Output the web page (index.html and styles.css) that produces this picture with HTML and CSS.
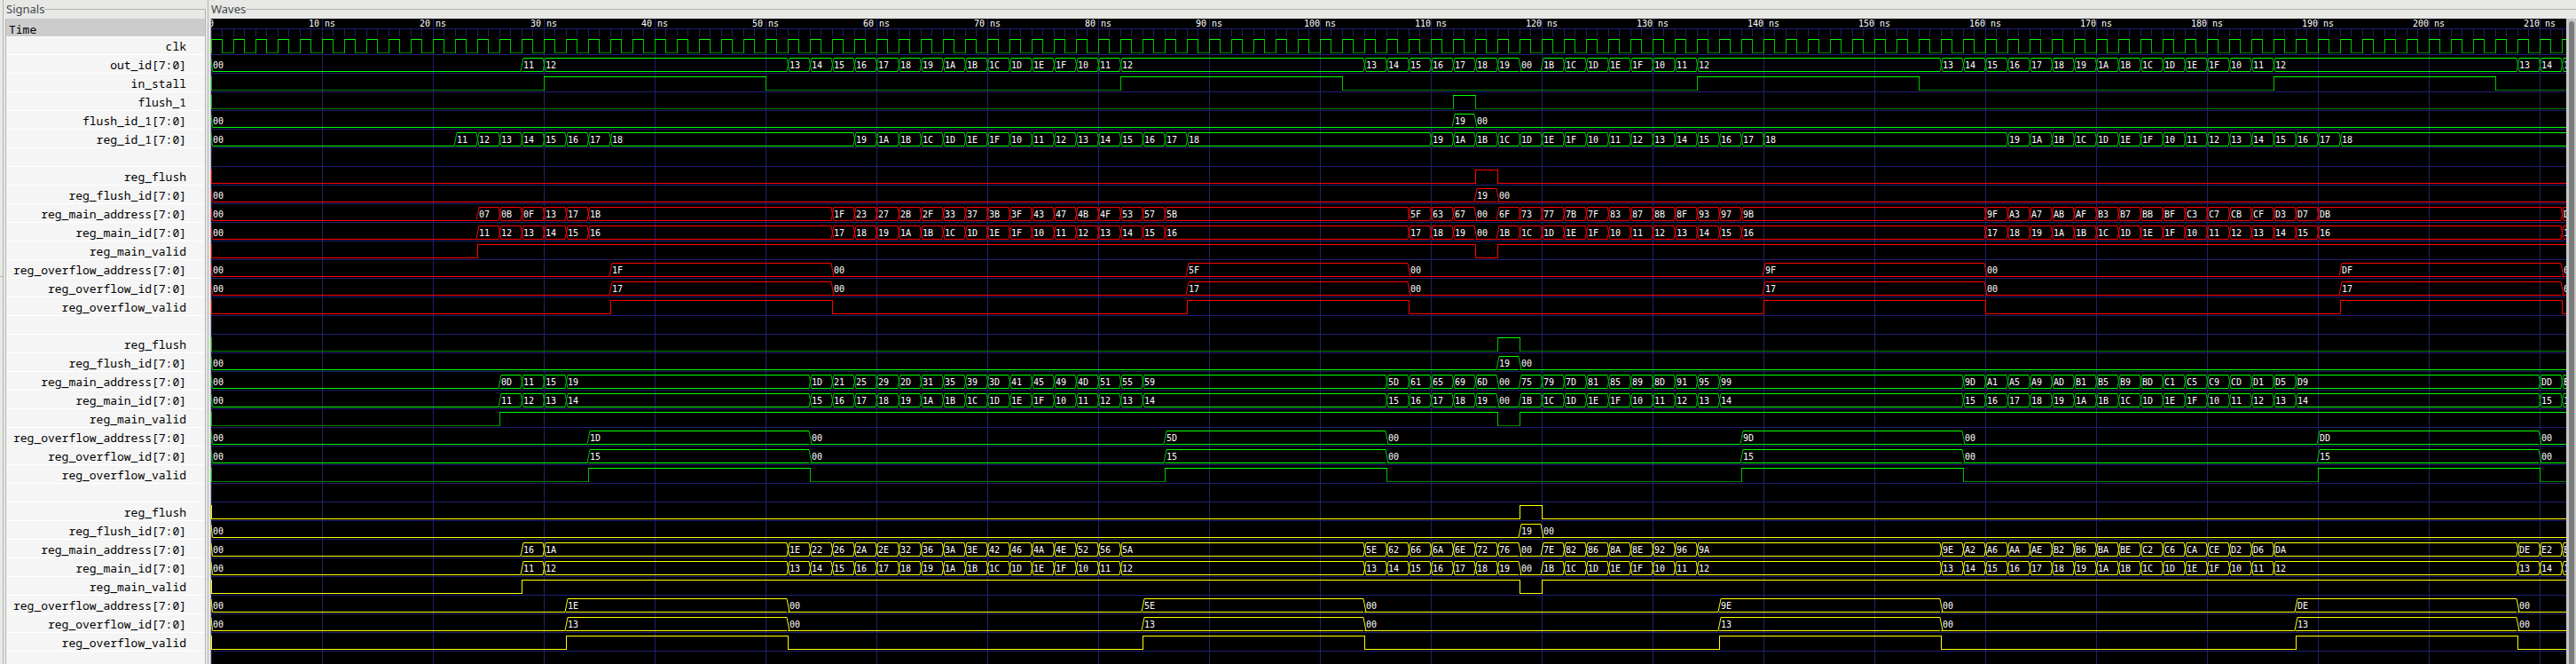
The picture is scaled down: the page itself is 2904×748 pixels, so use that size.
FILE: index.html
```html
<!DOCTYPE html>
<html lang="en">
<head>
<meta charset="utf-8">
<title>Waveform viewer</title>
<link rel="stylesheet" href="styles.css">
</head>
<body>
<main class="viewer">
  <div class="gutter"><div class="gutter-mark"></div></div>
  <div class="divider"></div>
  <fieldset class="panel signals">
    <legend>Signals</legend>
    <div class="signal-list">
      <div class="time-head">Time</div>
      <ul class="names" id="names"></ul>
    </div>
  </fieldset>
  <div class="divider"></div>
  <fieldset class="panel waves">
    <legend>Waves</legend>
    <div class="canvas" id="canvas">
      <svg class="axis" id="axis"></svg>
    </div>
    <div class="scrollbar"><div class="thumb"></div></div>
  </fieldset>
</main>
<script src="waves.js"></script>
</body>
</html>
```
FILE: styles.css
```css
:root {
  --row: 21px;
  --chrome: #e8e8e6;
  --line: #b4b4b0;
  --grid: #202070;
}
* { box-sizing: border-box; }
body {
  margin: 0;
  background: var(--chrome);
  font-family: "Noto Sans", sans-serif;
  font-size: 13px;
}
.viewer { display: flex; min-height: 100vh; }
.gutter { width: 3px; flex: none; }
.gutter-mark { margin-top: 311px; height: 1px; background: var(--line); }
.divider { width: 1px; flex: none; margin-right: 2px; background: var(--line); }
.panel {
  display: flex;
  min-width: 0;
  margin: 0;
  padding: 0;
  border: 1px solid var(--line);
  border-bottom: 0;
}
.panel legend {
  height: 21px;
  margin-left: -1px;
  padding: 0 0 0 1px;
  line-height: 20px;
  color: #43494b;
}
.signals { width: 226px; flex: none; margin-right: 2px; }
.waves { flex: 1; border-right: 0; }
.signal-list {
  flex: 1;
  background: #f5f5f5;
  font-family: "Noto Sans Mono", "DejaVu Sans Mono", monospace;
  color: #000;
}
.time-head {
  height: 20px;
  padding: 2px 3px 0;
  line-height: 20px;
  background: #cccccc;
}
.names { margin: 0; padding: 0; list-style: none; border-top: 1px solid #fff; }
.names li {
  height: var(--row);
  padding: 1px 21px 0 0;
  line-height: 20px;
  text-align: right;
  border-bottom: 1px solid #fff;
}
.names li:first-child { height: 20px; padding-top: 0; }
.canvas {
  flex: 1;
  min-width: 0;
  overflow: hidden;
  background: #000 repeating-linear-gradient(90deg, var(--grid) 0 1px, transparent 1px 125px);
}
.axis { display: block; width: 100%; height: 20px; }
.wave { display: block; width: 100%; height: var(--row); border-bottom: 1px solid var(--grid); }
.axis text, .wave text {
  font: 10px "DejaVu Sans Mono", monospace;
  fill: #fff;
}
.axis text { text-anchor: middle; }
.axis path { stroke: var(--grid); fill: none; }
.wave path { fill: none; stroke-width: 1px; }
.green .high, .green .bus { stroke: #00ff00; }
.green .low { stroke: #008000; }
.green .edge { stroke: #00c000; }
.red path { stroke: #ff0000; }
.yellow path { stroke: #ffff00; }
.scrollbar { width: 11px; flex: none; padding: 3px 2px 0 3px; display: flex; background: #c8c8c8; }
.thumb { flex: 1; background: #7b7d7d; border-radius: 3px 3px 0 0; }
```
FILE: waves.js
```js
const NS = 12.5;   // pixels per nanosecond
const END = 213;   // last nanosecond drawn
const HIGH = 3, LOW = 18;

// Counting sequences: n two-digit hex values from `first`, `step` apart.
const hex = v => v.toString(16).toUpperCase().padStart(2, "0");
const seq = (first, n, step) => Array.from({ length: n }, (_, i) => hex(first + i * step));
// Ids wrap round inside 10..1F.
const ids = (first, n) => Array.from({ length: n }, (_, i) => hex(16 + (first - 16 + i) % 16));
// Replaces the value at the flushed slot with 00.
const flushed = (list, slot) => list.map((v, i) => i === slot ? "00" : v);

// One group per burst: [start time, values 2 ns apart].
const bus = (...groups) => [[0, "00"], ...groups.flatMap(([t, list]) => list.map((v, i) => [t + 2 * i, v]))];

function stage(colour, start, n, addr, id, flush) {
  const next = start + 2 * (n - 1) + 22;
  const firstAddr = addr - 4 * n;
  const slot = (flush - next - 52) / 2;
  const over = [0, 1, 2, 3].map(k => [next - 20 + 52 * k, next + 52 * k]);
  const overBus = value => bus(...over.flatMap(([a, b], k) => [[a, [value(k)]], [b, ["00"]]]));
  return [
    ["reg_flush", colour, "bit", [[flush, flush + 2]]],
    ["reg_flush_id[7:0]", colour, "bus", bus([flush, ["19"]], [flush + 2, ["00"]])],
    ["reg_main_address[7:0]", colour, "bus", bus(
      [start, seq(firstAddr, n, 4)], [next, seq(addr, 16, 4)],
      [next + 52, flushed(seq(addr + 64, 16, 4), slot)],
      [next + 104, seq(addr + 128, 16, 4)], [next + 156, seq(addr + 192, 3, 4)])],
    ["reg_main_id[7:0]", colour, "bus", bus(
      [start, ids(17, n)], [next, ids(id, 16)],
      [next + 52, flushed(ids(id, 16), slot)],
      [next + 104, ids(id, 16)], [next + 156, ids(id, 3)])],
    ["reg_main_valid", colour, "bit", [[start, flush], [flush + 2, END + 9]]],
    ["reg_overflow_address[7:0]", colour, "bus", overBus(k => hex(addr + 64 * k))],
    ["reg_overflow_id[7:0]", colour, "bus", overBus(() => hex(id))],
    ["reg_overflow_valid", colour, "bit", over]
  ];
}

const clock = Array.from({ length: 107 }, (_, i) => [2 * i, 2 * i + 1]);
const rows = [
  ["clk", "green", "bit", clock],
  ["out_id[7:0]", "green", "bus", bus(
    [28, ids(17, 2)], [52, ids(19, 16)], [104, flushed(ids(19, 16), 7)],
    [156, ids(19, 16)], [208, ids(19, 3)])],
  ["in_stall", "green", "bit", [[30, 50], [82, 102], [134, 154], [186, 206]]],
  ["flush_1", "green", "bit", [[112, 114]]],
  ["flush_id_1[7:0]", "green", "bus", bus([112, ["19"]], [114, ["00"]])],
  ["reg_id_1[7:0]", "green", "bus", bus([22, ids(17, 8)], [58, ids(25, 16)], [110, ids(25, 16)], [162, ids(25, 16)])],
  null,
  ...stage("red", 24, 6, 0x1F, 0x17, 114),
  null,
  ...stage("green", 26, 4, 0x1D, 0x15, 116),
  null,
  ...stage("yellow", 28, 2, 0x1E, 0x13, 118)
];

const px = t => Math.floor(t * NS);
const path = (cls, d) => d ? `<path class="${cls}" d="${d}"/>` : "";

function drawBit(spans) {
  let high = "", low = "", edge = `M.5 ${HIGH}V${LOW + 1}`, at = 0;
  for (const [a, b] of spans) {
    const xa = px(a), xb = px(b);
    if (xa > at) low += `M${at} ${LOW + .5}H${xa}`;
    high += `M${xa} ${HIGH + .5}H${xb + 1}`;
    edge += `M${xa + .5} ${HIGH}V${LOW + 1}M${xb + .5} ${HIGH}V${LOW + 1}`;
    at = xb;
  }
  if (at < px(END)) low += `M${at} ${LOW + .5}H${px(END)}`;
  return path("low", low) + path("edge", edge) + path("high", high);
}

function drawBus(values) {
  const shown = values.filter(([t]) => t < END);
  let lines = "", edge = `M0 ${HIGH + 1}L1.5 ${LOW + .5}`, text = "";
  shown.forEach(([t, v], i) => {
    const x = px(t);
    const end = i + 1 < shown.length ? px(shown[i + 1][0]) - 1 : px(END);
    lines += `M${x + 2} ${LOW + .5}H${end}`;
    if (v !== "00") lines += `M${x + 2} ${HIGH + .5}H${end}`;
    if (i) {
      const before = shown[i - 1][1];
      if (v !== "00") edge += `M${x - 1} ${LOW + .5}L${x + 2} ${HIGH + .5}`;
      if (before !== "00") edge += `M${x - 1} ${HIGH + .5}L${x + 2} ${LOW + .5}`;
      if (v === "00" || before === "00") edge += `M${x} ${LOW + .5}H${x + 2}`;
    }
    text += `<text x="${x + 2}" y="15">${v}</text>`;
  });
  return path("edge", edge) + path("bus", lines) + text;
}

let ticks = `M0 11.5H${px(END)}`, labels = "";
for (let t = 0; t <= END; t++) {
  ticks += `M${px(t) + .5} 12V20`;
  if (t % 10 === 0) labels += `<text x="${px(t)}" y="9">${t ? t + " ns" : "0"}</text>`;
}
document.getElementById("axis").innerHTML = `<path d="${ticks}"/>${labels}`;

document.getElementById("names").innerHTML = rows.map(r => `<li>${r ? r[0] : ""}</li>`).join("");
document.getElementById("canvas").insertAdjacentHTML("beforeend", rows.map(r => {
  if (!r) return `<svg class="wave"></svg>`;
  const [, colour, kind, data] = r;
  return `<svg class="wave ${colour}">${kind === "bit" ? drawBit(data) : drawBus(data)}</svg>`;
}).join(""));
```
